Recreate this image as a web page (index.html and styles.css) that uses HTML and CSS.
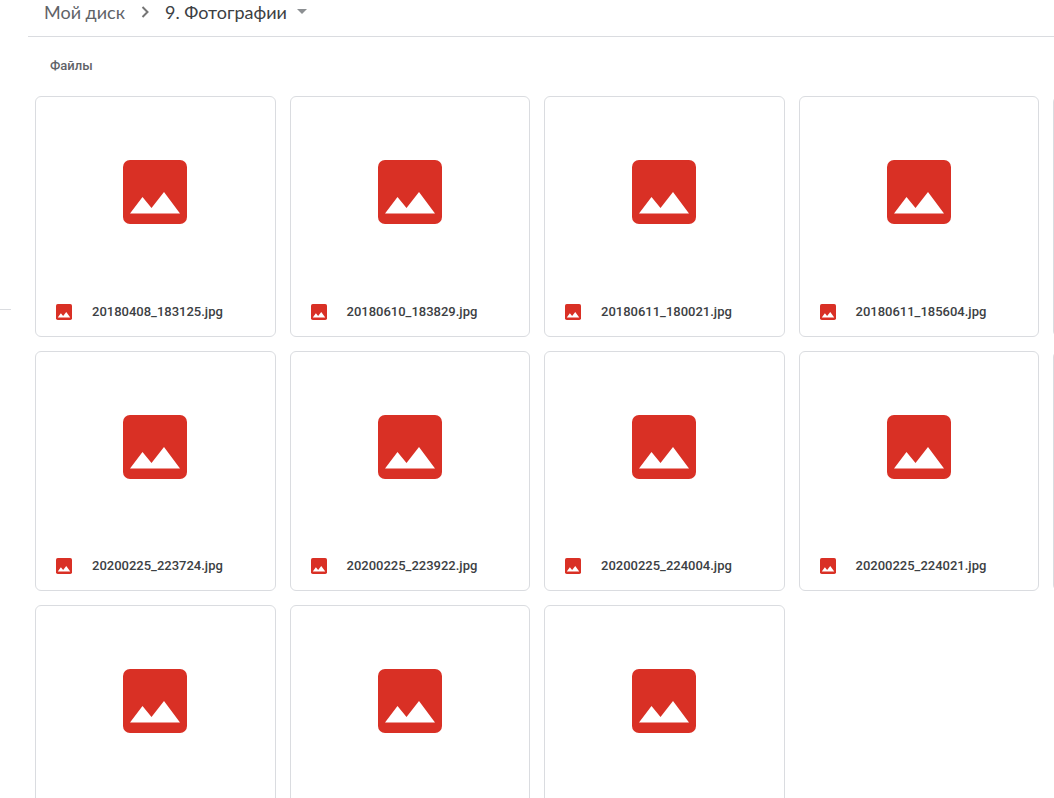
FILE: index.html
```
<!DOCTYPE html>
<html lang="ru">
<head>
<meta charset="utf-8">
<meta name="viewport" content="width=device-width, initial-scale=1">
<title>9. Фотографии</title>
<link rel="stylesheet" href="styles.css">
</head>
<body>
<svg class="defs" aria-hidden="true">
  <symbol id="image" viewBox="0 0 64 64">
    <rect width="64" height="64" rx="7" fill="#d93025"/>
    <path d="M7 53.500 19.500 37 28.500 48 41 32 57 53.500Z" fill="#fff"/>
  </symbol>
</svg>
<div class="app">
  <aside class="sidebar"><hr class="sidebar-rule"></aside>
  <main class="content">
    <nav class="crumbs">
      <a class="crumb" href="#">Мой диск</a>
      <svg class="chevron" viewBox="0 0 8 12" aria-hidden="true"><path d="M1.500 1 6.500 6 1.500 11" fill="none" stroke="#757575" stroke-width="2"/></svg>
      <button class="crumb current" type="button">9. Фотографии
        <svg class="caret" viewBox="0 0 10 5" aria-hidden="true"><path d="M0 0H10L5 5Z" fill="#8c8f92"/></svg>
      </button>
    </nav>
    <h2 class="heading">Файлы</h2>
    <div class="grid">
      <article class="card"><div class="preview"><svg class="large"><use href="#image"/></svg></div><div class="caption"><svg class="small"><use href="#image"/></svg><span>20180408_183125.jpg</span></div></article>
      <article class="card"><div class="preview"><svg class="large"><use href="#image"/></svg></div><div class="caption"><svg class="small"><use href="#image"/></svg><span>20180610_183829.jpg</span></div></article>
      <article class="card"><div class="preview"><svg class="large"><use href="#image"/></svg></div><div class="caption"><svg class="small"><use href="#image"/></svg><span>20180611_180021.jpg</span></div></article>
      <article class="card"><div class="preview"><svg class="large"><use href="#image"/></svg></div><div class="caption"><svg class="small"><use href="#image"/></svg><span>20180611_185604.jpg</span></div></article>
      <article class="card"></article>
      <article class="card"><div class="preview"><svg class="large"><use href="#image"/></svg></div><div class="caption"><svg class="small"><use href="#image"/></svg><span>20200225_223724.jpg</span></div></article>
      <article class="card"><div class="preview"><svg class="large"><use href="#image"/></svg></div><div class="caption"><svg class="small"><use href="#image"/></svg><span>20200225_223922.jpg</span></div></article>
      <article class="card"><div class="preview"><svg class="large"><use href="#image"/></svg></div><div class="caption"><svg class="small"><use href="#image"/></svg><span>20200225_224004.jpg</span></div></article>
      <article class="card"><div class="preview"><svg class="large"><use href="#image"/></svg></div><div class="caption"><svg class="small"><use href="#image"/></svg><span>20200225_224021.jpg</span></div></article>
      <article class="card"></article>
      <article class="card"><div class="preview"><svg class="large"><use href="#image"/></svg></div><div class="caption"></div></article>
      <article class="card"><div class="preview"><svg class="large"><use href="#image"/></svg></div><div class="caption"></div></article>
      <article class="card"><div class="preview"><svg class="large"><use href="#image"/></svg></div><div class="caption"></div></article>
    </div>
  </main>
</div>
</body>
</html>
```
FILE: styles.css
```
* {
  box-sizing: border-box;
}

body {
  margin: 0;
  background: #fff;
  color: #3c4043;
  font-family: Roboto, "Liberation Sans", sans-serif;
}

.defs {
  display: none;
}

.app {
  display: flex;
  height: 100vh;
  overflow: hidden;
}

.sidebar {
  flex: 0 0 28px;
  padding-top: 309px;
}

.sidebar-rule {
  width: 11px;
  margin: 0;
  border: 0;
  border-top: 1px solid #dadce0;
}

.content {
  flex: 1;
  min-width: 0;
}

.crumbs {
  display: flex;
  align-items: center;
  height: 37px;
  padding: 0 16px 13px;
  border-bottom: 1px solid #dadce0;
}

.crumb {
  color: #5f6368;
  font-family: Lato, Roboto, sans-serif;
  font-size: 18px;
  line-height: 24px;
  text-decoration: none;
  white-space: nowrap;
}

.current {
  display: flex;
  align-items: center;
  gap: 10px;
  padding: 0;
  border: 0;
  background: none;
  color: #3c4043;
}

.chevron {
  width: 8px;
  height: 12px;
  margin: 0 16px;
}

.caret {
  width: 10px;
  height: 5px;
}

.heading {
  margin: 0;
  padding: 19px 22px 20px;
  color: #5f6368;
  font-size: 13px;
  font-weight: 500;
  line-height: 20px;
}

.grid {
  display: grid;
  grid-template-columns: repeat(5, calc((100% - 42px) / 4));
  gap: 14px;
  margin: 0 15px 0 7px;
}

.card {
  display: flex;
  flex-direction: column;
  aspect-ratio: 1;
  border: 1px solid #dadce0;
  border-radius: 6px;
}

.preview {
  display: flex;
  flex: 1;
  align-items: center;
  justify-content: center;
}

.large {
  width: 64px;
  height: 64px;
}

.caption {
  display: flex;
  align-items: center;
  gap: 20px;
  height: 48px;
  padding: 0 20px;
  font-size: 13px;
  font-weight: 500;
  line-height: 20px;
}

.small {
  width: 16px;
  height: 16px;
}
```
